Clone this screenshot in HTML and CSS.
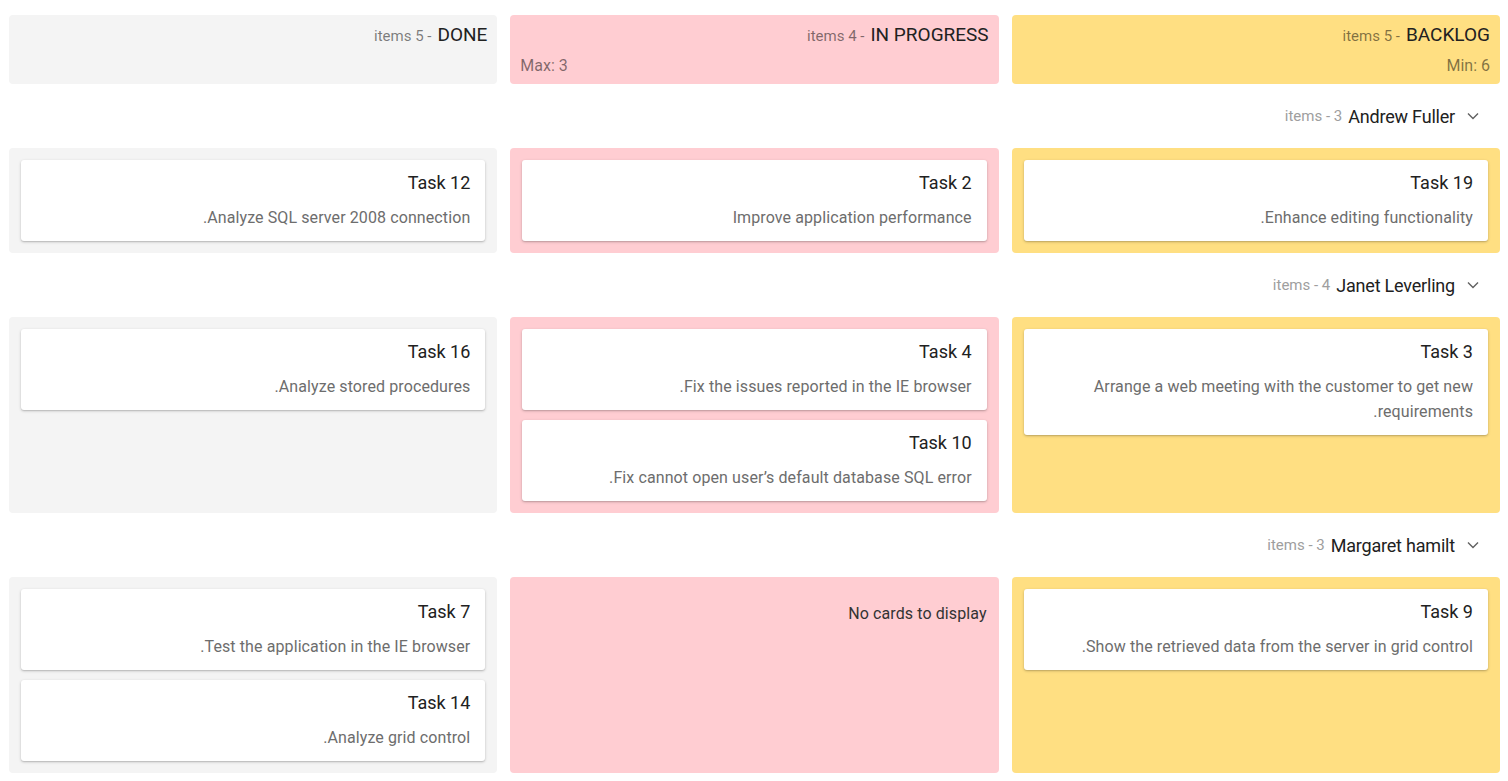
FILE: index.html
```html
<!DOCTYPE html>
<html lang="en">
<head>
<meta charset="utf-8">
<title>Kanban</title>
<link rel="stylesheet" href="styles.css">
</head>
<body>
<div class="board">
  <div class="col-header done">
    <div class="hdr-line"><span class="count">items 5 -</span><span class="title">DONE</span></div>
  </div>
  <div class="col-header progress">
    <div class="hdr-line"><span class="count">items 4 -</span><span class="title">IN PROGRESS</span></div>
    <div class="limit limit-left">Max: 3</div>
  </div>
  <div class="col-header backlog">
    <div class="hdr-line"><span class="count">items 5 -</span><span class="title">BACKLOG</span></div>
    <div class="limit">Min: 6</div>
  </div>

  <div class="lane-header">
    <span class="lane-count">items - 3</span><span class="lane-name">Andrew Fuller</span>
    <svg class="chev" width="12" height="8" viewBox="0 0 12 8"><path d="M1 1.5 L6 6.5 L11 1.5" fill="none" stroke="#616161" stroke-width="1.4"/></svg>
  </div>
  <div class="cell done">
    <div class="card"><div class="card-title">Task 12</div><div class="card-text">Analyze SQL server 2008 connection.</div></div>
  </div>
  <div class="cell progress">
    <div class="card"><div class="card-title">Task 2</div><div class="card-text">Improve application performance</div></div>
  </div>
  <div class="cell backlog">
    <div class="card"><div class="card-title">Task 19</div><div class="card-text">Enhance editing functionality.</div></div>
  </div>

  <div class="lane-header">
    <span class="lane-count">items - 4</span><span class="lane-name">Janet Leverling</span>
    <svg class="chev" width="12" height="8" viewBox="0 0 12 8"><path d="M1 1.5 L6 6.5 L11 1.5" fill="none" stroke="#616161" stroke-width="1.4"/></svg>
  </div>
  <div class="cell done">
    <div class="card"><div class="card-title">Task 16</div><div class="card-text">Analyze stored procedures.</div></div>
  </div>
  <div class="cell progress">
    <div class="card"><div class="card-title">Task 4</div><div class="card-text">Fix the issues reported in the IE browser.</div></div>
    <div class="card"><div class="card-title">Task 10</div><div class="card-text">Fix cannot open user’s default database SQL error.</div></div>
  </div>
  <div class="cell backlog">
    <div class="card"><div class="card-title">Task 3</div><div class="card-text">Arrange a web meeting with the customer to get new requirements.</div></div>
  </div>

  <div class="lane-header">
    <span class="lane-count">items - 3</span><span class="lane-name">Margaret hamilt</span>
    <svg class="chev" width="12" height="8" viewBox="0 0 12 8"><path d="M1 1.5 L6 6.5 L11 1.5" fill="none" stroke="#616161" stroke-width="1.4"/></svg>
  </div>
  <div class="cell done">
    <div class="card"><div class="card-title">Task 7</div><div class="card-text">Test the application in the IE browser.</div></div>
    <div class="card"><div class="card-title">Task 14</div><div class="card-text">Analyze grid control.</div></div>
  </div>
  <div class="cell progress">
    <div class="empty">No cards to display</div>
  </div>
  <div class="cell backlog">
    <div class="card"><div class="card-title">Task 9</div><div class="card-text">Show the retrieved data from the server in grid control.</div></div>
  </div>
</div>
</body>
</html>
```
FILE: styles.css
```css
* { box-sizing: border-box; }
html, body { margin: 0; padding: 0; background: #fff; }
body {
  font-family: Roboto, "Liberation Sans", Arial, sans-serif;
  color: #212121;
}
.board {
  display: grid;
  grid-template-columns: repeat(3, 1fr);
  column-gap: 13px;
  padding: 15px 8px 0 9px;
  width: 1508px;
}
.done { background: #f4f4f4; }
.progress { background: #ffcdd2; }
.backlog { background: #ffdf82; }

.col-header {
  height: 69px;
  border-radius: 4px;
  padding: 9px 10px 0 10px;
}
.hdr-line {
  display: flex;
  justify-content: flex-end;
  align-items: baseline;
  gap: 6px;
  height: 22px;
  line-height: 22px;
}
.hdr-line .title { font-size: 19px; color: #212121; }
.hdr-line .count { font-size: 15px; color: rgba(0,0,0,0.5); }
.limit {
  margin-top: 10px;
  font-size: 16px;
  line-height: 20px;
  color: rgba(0,0,0,0.5);
  text-align: right;
}
.limit-left { text-align: left; }

.lane-header {
  grid-column: 1 / -1;
  height: 64px;
  display: flex;
  justify-content: flex-end;
  align-items: center;
  padding-right: 21px;
}
.lane-count { font-size: 15px; color: #9e9e9e; margin-right: 6px; }
.lane-name { font-size: 18px; color: #212121; letter-spacing: -0.2px; }
.chev { margin-left: 12px; }

.cell {
  border-radius: 4px;
  padding: 12px;
  display: flex;
  flex-direction: column;
  gap: 10px;
}
.card {
  background: #fff;
  border-radius: 3px;
  box-shadow: 0 1px 3px rgba(0,0,0,0.22), 0 1px 1px rgba(0,0,0,0.08);
  padding: 11px 15px 11px 15px;
  text-align: right;
}
.card-title {
  font-size: 18px;
  line-height: 24px;
  color: #212121;
}
.card-text {
  direction: rtl;
  margin-top: 10px;
  font-size: 16px;
  line-height: 25px;
  letter-spacing: 0.1px;
  color: #6d6d6d;
}
.empty {
  padding-top: 16px;
  font-size: 16px;
  line-height: 18px;
  letter-spacing: 0.1px;
  color: #333;
  text-align: right;
}
```
